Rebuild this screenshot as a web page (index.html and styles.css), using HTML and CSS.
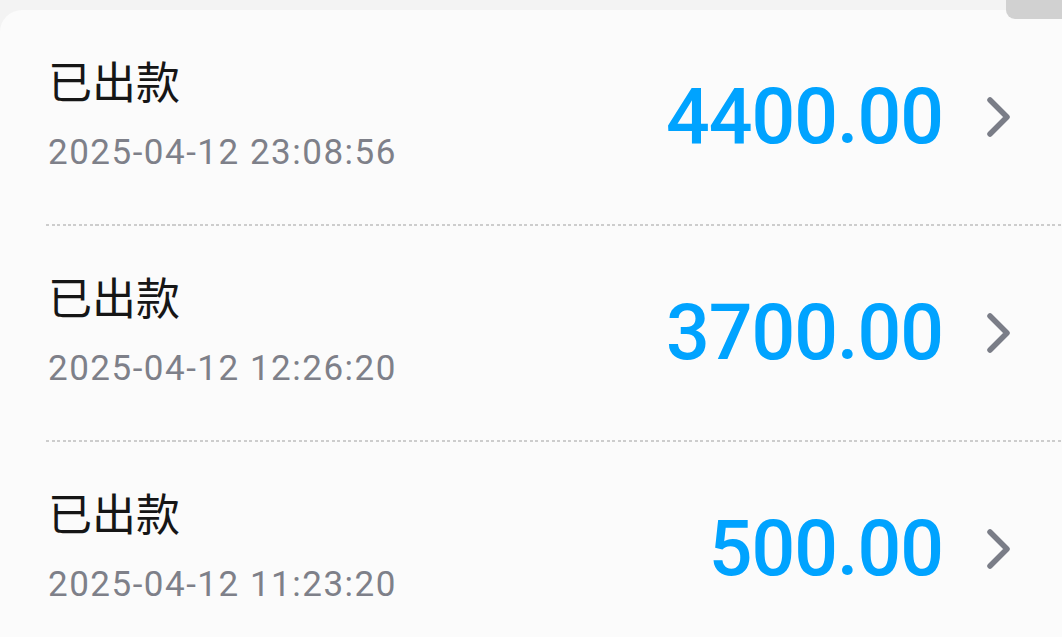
FILE: index.html
```html
<!DOCTYPE html>
<html lang="zh-CN">
<head>
  <meta charset="UTF-8">
  <meta name="viewport" content="width=device-width, initial-scale=1.0">
  <title>出款记录</title>
  <link rel="stylesheet" href="styles.css">
</head>
<body>
  <div class="tab-corner"></div>

  <div class="card">
    <div class="record">
      <div class="info">
        <div class="status">已出款</div>
        <div class="time">2025-04-12 23:08:56</div>
      </div>
      <div class="amount">4400.00</div>
      <svg class="arrow" viewBox="0 0 26 42" width="26" height="42">
        <polyline points="4,4 21,21 4,38" />
      </svg>
    </div>
    <div class="divider"></div>

    <div class="record">
      <div class="info">
        <div class="status">已出款</div>
        <div class="time">2025-04-12 12:26:20</div>
      </div>
      <div class="amount">3700.00</div>
      <svg class="arrow" viewBox="0 0 26 42" width="26" height="42">
        <polyline points="4,4 21,21 4,38" />
      </svg>
    </div>
    <div class="divider"></div>

    <div class="record">
      <div class="info">
        <div class="status">已出款</div>
        <div class="time">2025-04-12 11:23:20</div>
      </div>
      <div class="amount">500.00</div>
      <svg class="arrow" viewBox="0 0 26 42" width="26" height="42">
        <polyline points="4,4 21,21 4,38" />
      </svg>
    </div>
  </div>
</body>
</html>
```

FILE: styles.css
```css
html, body {
  height: 100%;
  overflow: hidden;
}
body {
  margin: 0;
  padding-top: 10px;
  box-sizing: border-box;
  background: #f3f3f3;
  font-family: Roboto, "Noto Sans CJK SC", sans-serif;
}
.tab-corner {
  position: absolute;
  top: 0;
  right: 0;
  width: 56px;
  height: 19px;
  background: #d1d1d1;
  border-bottom-left-radius: 9px;
}
.card {
  background: #fbfbfb;
  border-top-left-radius: 22px;
  height: 100%;
}
.record {
  height: 214px;
  display: flex;
  align-items: center;
  padding: 0 50px 0 48px;
}
.info {
  flex: 1;
  padding-bottom: 12px;
}
.status {
  font-family: "Noto Sans CJK SC", sans-serif;
  font-size: 44px;
  line-height: 60px;
  color: #161616;
}
.time {
  margin-top: 23px;
  font-size: 35px;
  line-height: 40px;
  color: #7e8089;
  letter-spacing: 1.5px;
}
.amount {
  font-size: 77px;
  font-weight: 500;
  letter-spacing: -1px;
  color: #00a3ff;
  margin-right: 43px;
}
.arrow {
  display: block;
}
.arrow polyline {
  fill: none;
  stroke: #7a7d87;
  stroke-width: 5.5;
  stroke-linecap: round;
  stroke-linejoin: round;
}
.divider {
  height: 2px;
  margin-left: 46px;
  background: repeating-linear-gradient(to right, #cdcdcd 0 3px, transparent 3px 5.5px);
}
```
